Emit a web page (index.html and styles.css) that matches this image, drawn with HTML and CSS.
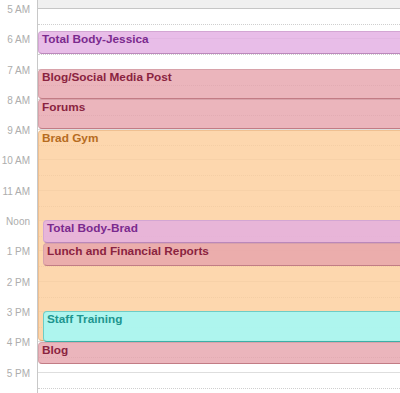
FILE: index.html
```html
<!DOCTYPE html>
<html lang="en">
<head>
  <meta charset="UTF-8" />
  <meta name="viewport" content="width=device-width, initial-scale=1.0" />
  <title>Day View</title>
  <link rel="stylesheet" href="styles.css">
</head>
<body>

  <div class="calendar">
    <!-- Kolom jam -->
    <div class="hours">
      <div class="hour">5 AM</div>
      <div class="hour">6 AM</div>
      <div class="hour">7 AM</div>
      <div class="hour">8 AM</div>
      <div class="hour">9 AM</div>
      <div class="hour">10 AM</div>
      <div class="hour">11 AM</div>
      <div class="hour">Noon</div>
      <div class="hour">1 PM</div>
      <div class="hour">2 PM</div>
      <div class="hour">3 PM</div>
      <div class="hour">4 PM</div>
      <div class="hour">5 PM</div>
    </div>

    <!-- Kolom hari -->
    <div class="day">
      <div class="day-top"></div>
      <div class="slot first"></div>
      <div class="slot"></div>
      <div class="slot"></div>
      <div class="slot"></div>
      <div class="slot"></div>
      <div class="slot"></div>
      <div class="slot"></div>
      <div class="slot"></div>
      <div class="slot"></div>
      <div class="slot"></div>
      <div class="slot"></div>
      <div class="slot"></div>
      <div class="slot"></div>

      <div class="event purple" style="top: 31px; height: 23px;">Total Body-Jessica</div>
      <div class="event pink" style="top: 69px; height: 30px;">Blog/Social Media Post</div>
      <div class="event pink" style="top: 99px; height: 30px;">Forums</div>
      <div class="event orange" style="top: 130px; height: 211px;">Brad Gym</div>
      <div class="event purple inset" style="top: 220px; height: 23px;">Total Body-Brad</div>
      <div class="event pink inset" style="top: 243px; height: 23px;">Lunch and Financial Reports</div>
      <div class="event cyan inset" style="top: 311px; height: 31px;">Staff Training</div>
      <div class="event pink" style="top: 342px; height: 22px;">Blog</div>
    </div>
  </div>

</body>
</html>
```

FILE: styles.css
```css
/* Global */
* {
  box-sizing: border-box;
}
body {
  margin: 0;
  padding: 0;
  background: #fff;
  font-family: "Liberation Sans", Arial, sans-serif;
  overflow: hidden;
}
.calendar {
  display: flex;
  height: 393px;
}
/* Kolom jam */
.hours {
  width: 38px;
  flex-shrink: 0;
  border-right: 1px solid #c8c8c8;
  padding-top: 0;
}
.hours .hour:first-child {
  margin-top: -5px; /* label di tengah garis jam */
}
.hour {
  height: 30.3px;
  line-height: 30.3px;
  padding-right: 7px;
  text-align: right;
  font-size: 10px;
  color: #adadad;
  white-space: nowrap;
}
/* Kolom hari */
.day {
  flex: 1;
  position: relative;
  overflow: hidden;
}
.day-top {
  height: 8px;
  background: #f0f0f0;
}
.slot {
  position: relative;
  height: 30.3px;
  border-top: 1px solid #dedede;
}
.slot.first {
  border-top-color: #c6c6c6;
}
.slot::after { /* garis setengah jam */
  content: "";
  position: absolute;
  left: 0;
  right: 0;
  top: 15px;
  border-top: 1px dotted #cfcfcf;
}
/* Event */
.event {
  position: absolute;
  left: 0;
  right: -8px;
  border: 1px solid;
  border-radius: 4px;
  padding: 1px 3px;
  font-size: 11.8px;
  line-height: 13px;
  font-weight: bold;
  white-space: nowrap;
  overflow: hidden;
}
.event.inset {
  left: 5px;
}
.purple {
  background: rgba(226, 172, 226, 0.8);
  border-color: #d3a6d3;
  border-bottom-color: #bb88bb;
  color: #7b2a8e;
}
.pink {
  background: rgba(230, 162, 171, 0.8);
  border-color: #d8a2aa;
  border-bottom-color: #c27c85;
  color: #8a2340;
}
.orange {
  background: rgba(252, 205, 154, 0.8);
  border-color: #efc091;
  border-bottom-color: #e2a974;
  color: #b66c1f;
}
.cyan {
  background: rgba(165, 248, 245, 0.9);
  border-color: #6dcdc6;
  border-bottom-color: #3cafa7;
  color: #20958f;
}
```
